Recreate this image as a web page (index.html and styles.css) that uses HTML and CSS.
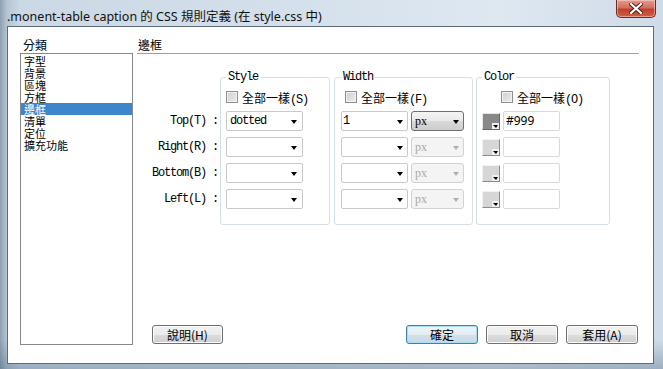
FILE: index.html
```html
<!DOCTYPE html>
<html lang="zh-Hant">
<head>
    <meta charset="UTF-8">
    <title>CSS 規則定義</title>
    <link rel="stylesheet" href="styles.css">
</head>
<body>
    <div class="window">
        <div class="titlebar">
            <span class="title">.monent-table caption 的 CSS 規則定義 (在 style.css 中)</span>
            <button class="close">
                <svg width="14" height="11" viewBox="0 0 14 11">
                    <path d="M2 1 L12 10 M12 1 L2 10" stroke="#4a1a1a" stroke-width="4" stroke-linecap="square" fill="none"/>
                    <path d="M2 1 L12 10 M12 1 L2 10" stroke="#fff" stroke-width="2.2" stroke-linecap="square" fill="none"/>
                </svg>
            </button>
        </div>

        <div class="client">
            <div class="category">
                <div class="pane-title">分類</div>
                <ul class="listbox">
                    <li>字型</li>
                    <li>背景</li>
                    <li>區塊</li>
                    <li>方框</li>
                    <li class="selected">邊框</li>
                    <li>清單</li>
                    <li>定位</li>
                    <li>擴充功能</li>
                </ul>
            </div>

            <div class="panel">
                <div class="panel-title">邊框</div>

                <div class="groups">
                    <div class="labels">
                        <div class="m">Top(T) :</div>
                        <div class="m">Right(R) :</div>
                        <div class="m">Bottom(B) :</div>
                        <div class="m">Left(L) :</div>
                    </div>

                    <div class="group group-style">
                        <span class="legend m">Style</span>
                        <div class="check"><span class="box"></span>全部一樣<span class="m">(S)</span></div>
                        <div class="rows">
                            <div class="select sel-style"><span class="m">dotted</span><i class="arrow"></i></div>
                            <div class="select sel-style"><span></span><i class="arrow"></i></div>
                            <div class="select sel-style"><span></span><i class="arrow"></i></div>
                            <div class="select sel-style"><span></span><i class="arrow"></i></div>
                        </div>
                    </div>

                    <div class="group group-width">
                        <span class="legend m">Width</span>
                        <div class="check"><span class="box"></span>全部一樣<span class="m">(F)</span></div>
                        <div class="rows">
                            <div class="row">
                                <div class="select sel-num"><span class="m">1</span><i class="arrow"></i></div>
                                <div class="select unit"><span class="serif">px</span><i class="arrow"></i></div>
                            </div>
                            <div class="row">
                                <div class="select sel-num"><span></span><i class="arrow"></i></div>
                                <div class="select unit disabled"><span class="serif">px</span><i class="arrow"></i></div>
                            </div>
                            <div class="row">
                                <div class="select sel-num"><span></span><i class="arrow"></i></div>
                                <div class="select unit disabled"><span class="serif">px</span><i class="arrow"></i></div>
                            </div>
                            <div class="row">
                                <div class="select sel-num"><span></span><i class="arrow"></i></div>
                                <div class="select unit disabled"><span class="serif">px</span><i class="arrow"></i></div>
                            </div>
                        </div>
                    </div>

                    <div class="group group-color">
                        <span class="legend m">Color</span>
                        <div class="check"><span class="box"></span>全部一樣<span class="m">(O)</span></div>
                        <div class="rows">
                            <div class="row">
                                <span class="swatch"></span>
                                <div class="textbox">#999</div>
                            </div>
                            <div class="row">
                                <span class="swatch disabled"></span>
                                <div class="textbox"></div>
                            </div>
                            <div class="row">
                                <span class="swatch disabled"></span>
                                <div class="textbox"></div>
                            </div>
                            <div class="row">
                                <span class="swatch disabled"></span>
                                <div class="textbox"></div>
                            </div>
                        </div>
                    </div>
                </div>

                <div class="buttons">
                    <button class="btn btn-help">說明(H)</button>
                    <span class="spacer"></span>
                    <button class="btn btn-default">確定</button>
                    <button class="btn">取消</button>
                    <button class="btn">套用(A)</button>
                </div>
            </div>
        </div>
    </div>
</body>
</html>
```

FILE: styles.css
```css
* { margin: 0; padding: 0; box-sizing: border-box; }

body {
    font-family: "Noto Sans CJK TC", sans-serif;
    font-size: 12px;
    color: #000;
    background: #c3d3e2;
}

.m {
    font-family: "Liberation Mono", "Courier New", monospace;
    font-size: 12px;
    letter-spacing: -1.2px;
}

.serif {
    font-family: "Liberation Serif", serif;
    font-size: 12px;
}

/* window frame */

.window {
    width: 663px;
    height: 369px;
    display: flex;
    flex-direction: column;
    background:
        linear-gradient(to bottom, rgba(255, 255, 255, 0) 0, rgba(255, 255, 255, 0) 92%, rgba(60, 90, 120, 0.35) 100%),
        linear-gradient(to right, #8e9fb0 0, #b4c4d3 1%, #cbd8e5 3%, #d4e0eb 45%, #dfe8f1 75%, #cfdbe8 100%);
}

.titlebar {
    height: 26px;
    display: flex;
    align-items: flex-start;
    padding-left: 7px;
}

.title {
    margin-top: 9px;
    line-height: 16px;
    font-family: "Noto Sans", "Noto Sans CJK TC", sans-serif;
    font-size: 12.5px;
    color: #111;
    white-space: nowrap;
}

.close {
    margin-left: auto;
    margin-right: 7px;
    width: 40px;
    height: 18px;
    border: 1px solid #6b2b24;
    border-top: none;
    border-radius: 0 0 5px 5px;
    background: linear-gradient(#e49c8e 0, #d0705d 45%, #c23f2a 55%, #cc6248 100%);
    box-shadow: inset 0 0 0 1px rgba(255, 220, 210, 0.5);
    display: flex;
    align-items: center;
    justify-content: center;
}

.client {
    height: 338px;
    margin: 0 9px 0 7px;
    border: 1px solid #5d6a78;
    background: #fff;
    display: flex;
    padding: 10px 14px 18px 12px;
}

/* category list */

.category {
    width: 113px;
    display: flex;
    flex-direction: column;
}

.pane-title {
    line-height: 16px;
    padding-left: 3px;
}

.listbox {
    flex: 1;
    list-style: none;
    border: 1px solid #84898f;
    padding-top: 1px;
}

.listbox li {
    font-size: 11px;
    line-height: 12px;
    height: 12px;
    padding-left: 3px;
}

.listbox li.selected {
    background: #3d86cc;
    color: #fff;
}

/* border panel */

.panel {
    flex: 1;
    margin-left: 4px;
    display: flex;
    flex-direction: column;
}

.panel-title {
    line-height: 16px;
    padding-left: 1px;
    border-bottom: 1px solid #a0a0a0;
}

.groups {
    display: flex;
    align-items: flex-start;
    margin-top: 23px;
}

.labels {
    width: 83px;
    padding-top: 34px;
    padding-right: 2px;
    display: flex;
    flex-direction: column;
    gap: 6px;
    text-align: right;
}

.labels div {
    height: 20px;
    line-height: 20px;
    white-space: nowrap;
}

.group {
    position: relative;
    border: 1px solid #d5dfe5;
    border-radius: 3px;
    padding: 13px 0 15px 5px;
}

.group-style { width: 110px; }
.group-width { width: 139px; margin-left: 4px; padding-left: 6px; }
.group-color { width: 134px; margin-left: 3px; }

.legend {
    position: absolute;
    top: -8px;
    left: 5px;
    line-height: 14px;
    padding: 0 2px;
    background: #fff;
}

.group-width .legend { left: 6px; }

.check {
    height: 13px;
    line-height: 13px;
    white-space: nowrap;
}

.group-width .check { margin-left: 4px; }
.group-color .check { margin-left: 19px; }

.box {
    display: inline-block;
    vertical-align: top;
    width: 12px;
    height: 12px;
    margin-right: 4px;
    border: 1px solid #8f8f8f;
    background: linear-gradient(135deg, #cfcfcf, #ececec);
    box-shadow: inset 0 0 0 1px #f3f3f3;
}

.rows {
    margin-top: 7px;
    display: flex;
    flex-direction: column;
    gap: 6px;
}

.row {
    display: flex;
    align-items: center;
    height: 20px;
}

/* drop-downs */

.select {
    height: 20px;
    border: 1px solid #c9c9c9;
    border-radius: 2px;
    background: #fff;
    display: flex;
    align-items: center;
    justify-content: space-between;
    padding: 0 5px 0 3px;
}

.sel-style { width: 77px; }
.sel-num { width: 67px; padding-left: 1px; padding-right: 4px; }

.arrow {
    width: 1px;
    height: 0;
    border-left: 3px solid transparent;
    border-right: 3px solid transparent;
    border-top: 4px solid #000;
    margin-top: 1px;
}

.unit {
    width: 53px;
    margin-left: 3px;
    border-color: #707070;
    border-radius: 3px;
    background: linear-gradient(#f4f4f4 0, #e9e9e9 50%, #dadada 50%, #cdcdcd 100%);
    padding-right: 4px;
}

.unit.disabled {
    border-color: #d2d2d2;
    background: #f4f4f4;
    color: #a8a8a8;
}

.unit.disabled .arrow { border-top-color: #b0b0b0; }

/* colour pickers */

.swatch {
    position: relative;
    width: 18px;
    height: 17px;
    border: 1px solid;
    border-color: #e6e6e6 #666 #666 #e6e6e6;
    background: #898989;
}

.swatch::after {
    content: "";
    position: absolute;
    right: 0;
    bottom: 0;
    width: 7px;
    height: 5px;
    background: #f0f0f0;
    border-top: 1px solid #f0f0f0;
}

.swatch::before {
    content: "";
    position: absolute;
    right: 1px;
    bottom: 1px;
    z-index: 1;
    border-left: 3px solid transparent;
    border-right: 2px solid transparent;
    border-top: 3px solid #000;
}

.swatch.disabled {
    background: #d6d6d6;
    border-color: #f2f2f2 #8c8c8c #8c8c8c #f2f2f2;
}

.textbox {
    width: 57px;
    height: 20px;
    margin-left: 3px;
    border: 1px solid #d9d9d9;
    border-radius: 2px;
    line-height: 18px;
    padding-left: 2px;
    font-family: "Noto Sans", sans-serif;
    font-size: 12px;
}

/* dialog buttons */

.buttons {
    margin-top: auto;
    margin-bottom: 1px;
    display: flex;
    gap: 8px;
    padding-left: 15px;
    padding-right: 1px;
}

.spacer { flex: 1; }

.btn {
    width: 72px;
    height: 19px;
    border: 1px solid #707070;
    border-radius: 3px;
    background: linear-gradient(#f2f2f2 0, #ebebeb 50%, #dddddd 50%, #cfcfcf 100%);
    box-shadow: inset 0 0 0 1px #fbfbfb;
    font-family: "Noto Sans CJK TC", sans-serif;
    font-size: 12px;
    line-height: 16px;
    color: #000;
}

.btn-help { width: 71px; }

.btn-default {
    border-color: #3c7fb1;
    background: linear-gradient(#eef4f8 0, #e3ecf3 50%, #d3e0ea 50%, #c9d8e4 100%);
    box-shadow: inset 0 0 0 1px #a9dcf6;
}
```
